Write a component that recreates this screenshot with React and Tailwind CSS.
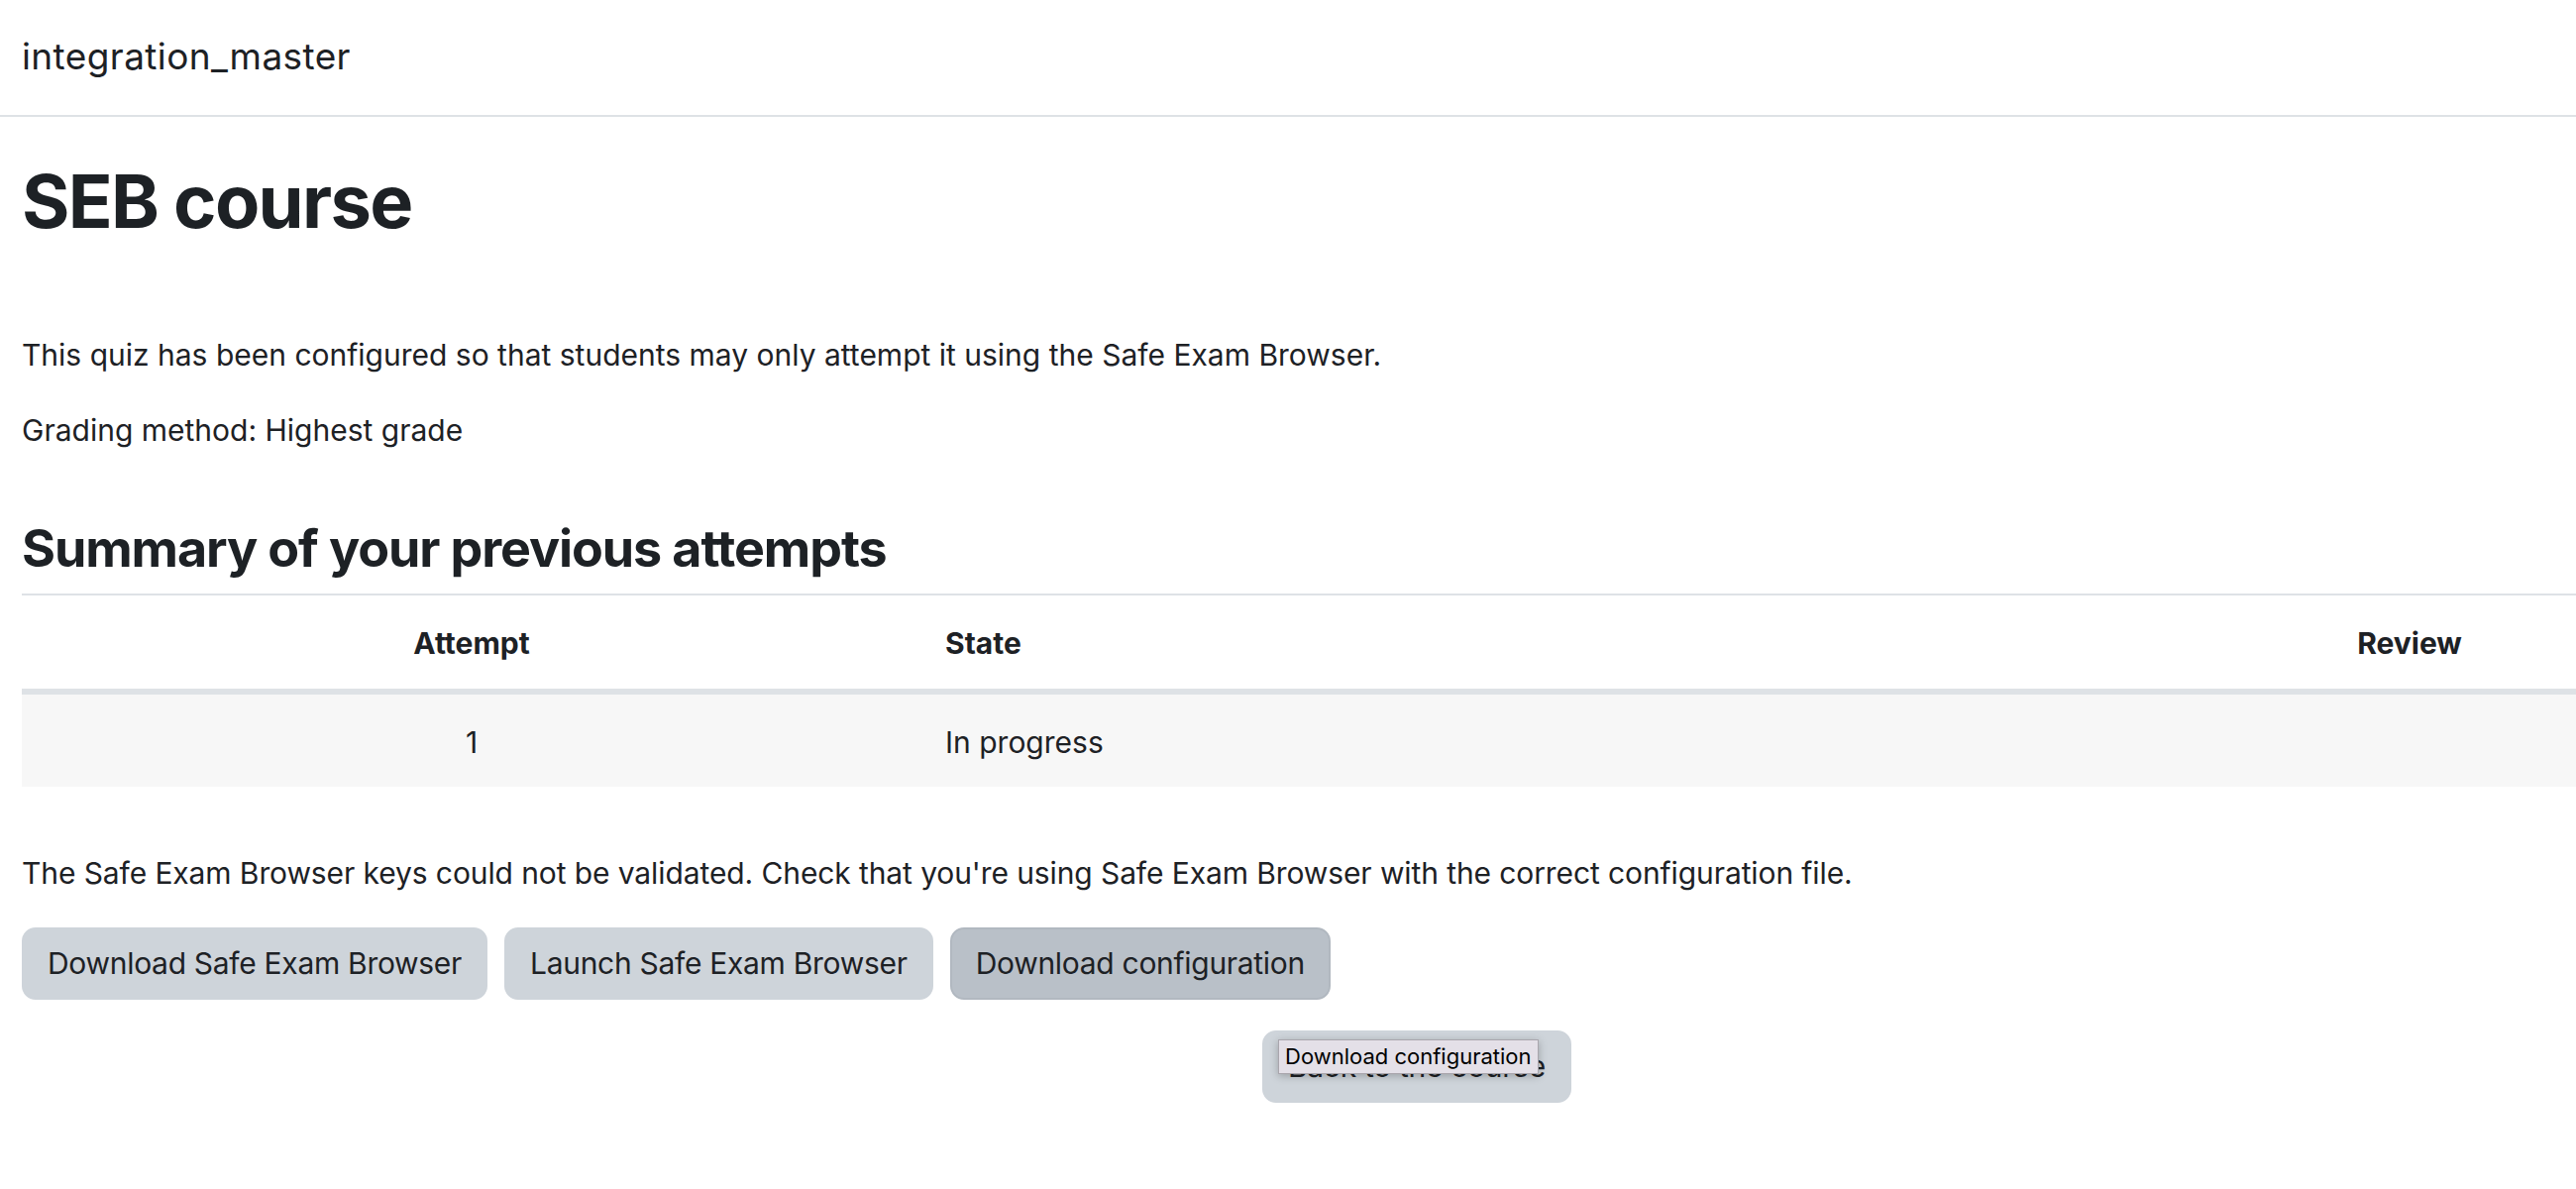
import React from "react";

const btn =
  "h-[73px] rounded-[14px] border-2 px-[24px] text-[30px] leading-[45px] tracking-[-0.3px] text-[#1d2125] whitespace-nowrap";

export default function App() {
  return (
    <div className="w-[2600px] h-[1200px] overflow-hidden bg-white font-['Inter','Noto_Sans',sans-serif] text-[#1d2125]">
      {/* navbar */}
      <header className="h-[118px] border-b-2 border-[#dee2e6] px-[22px] flex items-center pb-[2px]">
        <span className="text-[37px] leading-[56px] tracking-[0.4px]">integration_master</span>
      </header>

      <main className="px-[22px]">
        <h1 className="mt-[40px] text-[74px] leading-[90px] font-bold tracking-[-1.7px]">SEB course</h1>

        <p className="mt-[88px] text-[30px] leading-[45px]">
          This quiz has been configured so that students may only attempt it using the Safe Exam Browser.
        </p>
        <p className="mt-[31px] text-[30px] leading-[45px]">Grading method: Highest grade</p>

        <h3 className="mt-[66px] text-[52px] leading-[62px] font-bold tracking-[-1.1px]">
          Summary of your previous attempts
        </h3>

        <table className="mt-[14px] w-[2582px] table-fixed border-collapse text-[30px] leading-[45px]">
          <colgroup>
            <col className="w-[908px]" />
            <col className="w-[1330px]" />
            <col className="w-[344px]" />
          </colgroup>
          <thead>
            <tr className="border-t-2 border-[#dee2e6]">
              <th className="px-[24px] pt-[26px] pb-[23px] text-center font-bold">Attempt</th>
              <th className="px-[24px] pt-[26px] pb-[23px] text-left font-bold">State</th>
              <th className="px-[24px] pt-[26px] pb-[23px] text-center font-bold">Review</th>
            </tr>
          </thead>
          <tbody>
            <tr className="border-t-[6px] border-[#dee2e6] bg-[#f7f7f7]">
              <td className="px-[24px] pt-[26px] pb-[22px] text-center">1</td>
              <td className="px-[24px] pt-[26px] pb-[22px] text-left">In progress</td>
              <td className="px-[24px] pt-[26px] pb-[22px]"></td>
            </tr>
          </tbody>
        </table>

        <p className="mt-[65px] text-[30px] leading-[45px] tracking-[-0.1px]">
          The Safe Exam Browser keys could not be validated. Check that you're using Safe Exam Browser with the correct configuration file.
        </p>

        <div className="mt-[32px] flex gap-[17px]">
          <button className={`${btn} bg-[#ced4da] border-[#ced4da]`}>Download Safe Exam Browser</button>
          <button className={`${btn} bg-[#ced4da] border-[#ced4da]`}>Launch Safe Exam Browser</button>
          <button className={`${btn} bg-[#b9c0c8] border-[#b1b8c0]`}>Download configuration</button>
        </div>

        <div className="mt-[31px] ml-[1252px] relative w-fit">
          <button className={`${btn} bg-[#ced4da] border-[#ced4da]`}>Back to the course</button>
          <div className="absolute left-[16px] top-[9px] h-[35px] px-[6px] bg-[#e4e0e8] border border-[#a9a6ad] shadow-[0_2px_8px_rgba(0,0,0,0.25)] text-[22px] leading-[33px] tracking-normal text-black whitespace-nowrap">
            Download configuration
          </div>
        </div>
      </main>
    </div>
  );
}
